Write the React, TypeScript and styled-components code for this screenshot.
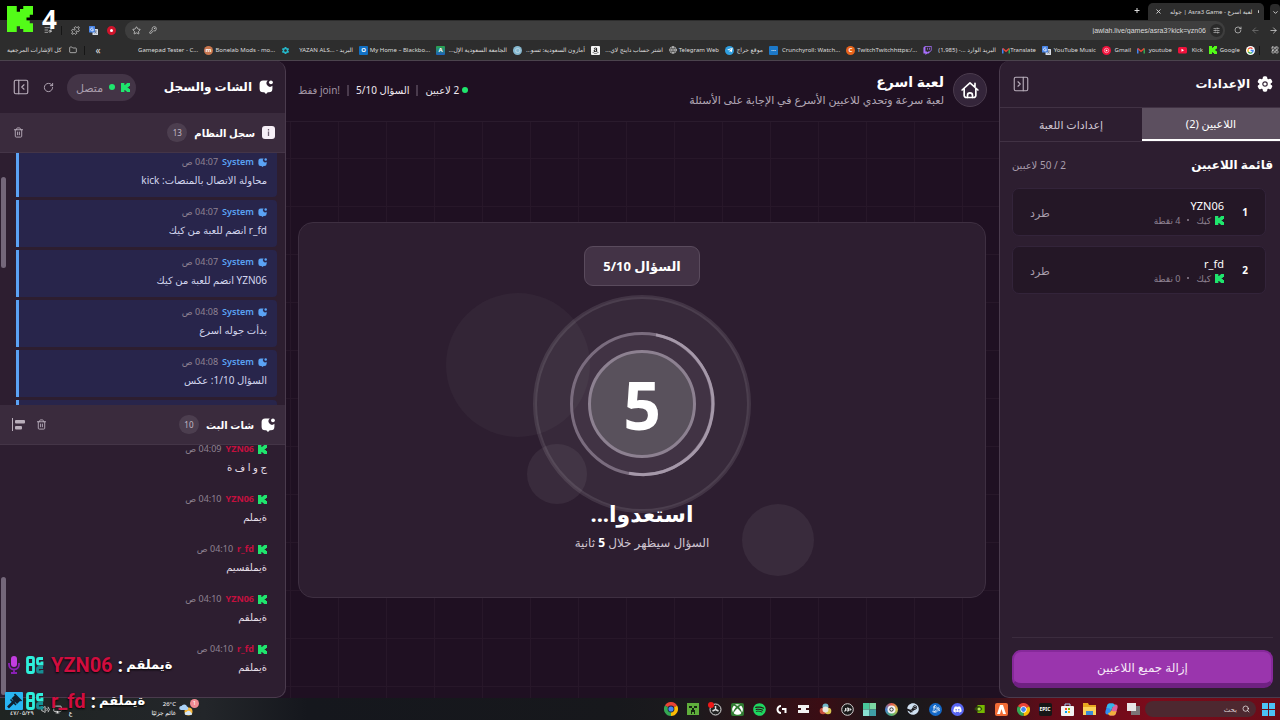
import React from "react";
import styled, { createGlobalStyle, css } from "styled-components";
import {
  ArrowLeft, ArrowRight, ChevronDown, Folder, Globe, KeyRound, LayoutGrid, ListMusic, Monitor,
  PanelLeftClose, PanelRightClose, Puzzle, RotateCw, Search, SlidersHorizontal, Star, Trash2, Volume2, X,
} from "lucide-react";
import { FaAmazon, FaBattleNet, FaDiscord, FaSpotify, FaSteam, FaTelegramPlane, FaTwitch, FaXbox } from "react-icons/fa";
import { MdSettings } from "react-icons/md";

const Global = createGlobalStyle`
  * { box-sizing: border-box; }
  body { margin: 0; background: #1f1022; color: #fff; font-family: "Noto Sans", "DejaVu Sans", sans-serif; }
  button, input { font: inherit; color: inherit; }
  button { background: none; border: 0; padding: 0; cursor: pointer; }
  h1, h2, h3, p, ul { margin: 0; padding: 0; }
  ul { list-style: none; }
  svg { display: block; flex: none; }
`;

/* ---------- icons ---------- */

const KickMark = ({ size = 10, color = "#1fe56d" }: { size?: number; color?: string }) => (
  <svg width={size} height={size} viewBox="0 0 8 9" preserveAspectRatio="none" fill={color}>
    <path d="M0 0H3V2H4V1H5V0H8V3H7V4H6V5H7V6H8V9H5V8H4V7H3V9H0Z" />
  </svg>
);

const ChatBubble = ({ size = 14 }: { size?: number }) => (
  <svg width={size} height={size} viewBox="0 0 24 24" fill="currentColor">
    <path d="M15 1H7a6 6 0 0 0-6 6v8a6 6 0 0 0 6 6h2l3 3 3-3h2a6 6 0 0 0 6-6v-5A6 6 0 0 1 15 1z" />
    <circle cx="20.500" cy="4" r="3.300" />
  </svg>
);

const InfoSquare = () => (
  <svg width="13" height="13" viewBox="0 0 13 13">
    <rect width="13" height="13" rx="3" fill="#f6eff7" />
    <path d="M6.500 3v1.400M6.500 5.600V10" stroke="#6d5f70" strokeWidth="1.300" />
  </svg>
);

const GearIcon = () => (
  <svg width="16" height="16" viewBox="0 0 24 24">
    <g fill="#fff">
      <circle cx="12" cy="12" r="8.500" />
      <rect x="8.500" y="0.500" width="7" height="23" rx="2.500" />
      <rect x="8.500" y="0.500" width="7" height="23" rx="2.500" transform="rotate(60 12 12)" />
      <rect x="8.500" y="0.500" width="7" height="23" rx="2.500" transform="rotate(120 12 12)" />
    </g>
    <circle cx="12" cy="12" r="3.300" fill="none" stroke="#3a2b3d" strokeWidth="1.800" />
  </svg>
);

const HomeIcon = () => (
  <svg width="20" height="20" viewBox="0 0 24 24" fill="none" stroke="#fff" strokeWidth="2" strokeLinecap="round" strokeLinejoin="round">
    <path d="M2.500 12 12 3.500 21.500 12M18 8V4M5 10v8.500A2.500 2.500 0 0 0 7.500 21h9a2.500 2.500 0 0 0 2.500-2.500V10" />
    <path d="M9 21v-2.500a3 3 0 0 1 6 0V21" />
  </svg>
);

const AlignIcon = () => (
  <svg width="13" height="13" viewBox="0 0 13 13" fill="#b9aebb">
    <path d="M0 0h1v13H0z" />
    <rect x="3" y="2" width="10" height="3.500" rx="1" />
    <rect x="3" y="8" width="7" height="3.500" rx="1" />
  </svg>
);

const GoogleG = () => (
  <svg width="9" height="9" viewBox="0 0 18 18">
    <circle cx="9" cy="9" r="9" fill="#fff" />
    <g fill="none" strokeWidth="2.600">
      <path d="M12.800 5.500A5.200 5.200 0 0 0 4.700 6.200" stroke="#ea4335" />
      <path d="M4.700 6.200a5.200 5.200 0 0 0 0 5.600" stroke="#fbbc05" />
      <path d="M4.700 11.800a5.200 5.200 0 0 0 7.600 1.400" stroke="#34a853" />
      <path d="M12.300 13.200A5.200 5.200 0 0 0 14.200 9H9.200" stroke="#4285f4" />
    </g>
  </svg>
);

const GmailIcon = () => (
  <svg width="8" height="7" viewBox="0 0 16 12" fill="none" strokeWidth="3">
    <path d="M1.500 12V2" stroke="#4285f4" />
    <path d="M14.500 12V2" stroke="#34a853" />
    <path d="M1.500 2 8 7.500 14.500 2" stroke="#ea4335" />
  </svg>
);

const TranslateIcon = () => (
  <svg width="9" height="9" viewBox="0 0 18 18">
    <rect x="7" y="6" width="11" height="12" rx="1" fill="#d7dce5" />
    <rect width="12" height="13" rx="1" fill="#4a86e8" />
    <path d="M8.500 5.200A3 3 0 1 0 9 7.500H6.200" stroke="#fff" strokeWidth="1.500" fill="none" />
    <path d="M11 10h5M13.500 9v1.500c0 2-1 4-2.500 5M12 11c.5 2 2 3.500 4 4" stroke="#5d6b82" strokeWidth="1.200" fill="none" />
  </svg>
);

const YoutubeIcon = () => (
  <svg width="9" height="7" viewBox="0 0 18 14">
    <rect width="18" height="13" rx="3" fill="#f0123c" />
    <path d="M7 3.500v6l5-3z" fill="#fff" />
  </svg>
);

const MusicIcon = () => (
  <svg width="9" height="9" viewBox="0 0 18 18">
    <circle cx="9" cy="9" r="9" fill="#f0123c" />
    <circle cx="9" cy="9" r="4.500" fill="none" stroke="#fff" />
    <path d="M7.500 6.500v5l4-2.500z" fill="#fff" />
  </svg>
);

const ChromeIcon = ({ size = 13, ring = "#fff" }: { size?: number; ring?: string }) => (
  <svg width={size} height={size} viewBox="0 0 24 24">
    <path d="M12 12 1.600 6A12 12 0 0 1 22.400 6z" fill="#ea4335" />
    <path d="M12 12 22.400 6A12 12 0 0 1 12 24z" fill="#fbbc05" />
    <path d="M12 12v12A12 12 0 0 1 1.600 6z" fill="#34a853" />
    <circle cx="12" cy="12" r="5.800" fill={ring} />
    <circle cx="12" cy="12" r="4.400" fill="#4285f4" />
  </svg>
);

const MicIcon = () => (
  <svg width="12" height="18" viewBox="0 0 12 18">
    <rect x="3" width="6" height="11" rx="3" fill="#c23de0" />
    <path d="M1 7v1.500a5 5 0 0 0 10 0V7M6 13.500V17M3 17h6" fill="none" stroke="#8a1fb5" strokeWidth="1.800" />
  </svg>
);

const ClanBadge = () => (
  <svg width="18" height="18" viewBox="0 0 18 18" fill="none" strokeWidth="2.800">
    <rect x="1.500" y="1.500" width="6" height="7" rx="1.500" stroke="#2ef0dc" />
    <rect x="1.500" y="8.500" width="6" height="8" rx="1.500" stroke="#2ef0dc" />
    <path d="M17 2.500h-4a1.500 1.500 0 0 0-1.500 1.500v2.500a1.500 1.500 0 0 0 1.500 1.500h3V5.500" stroke="#2ef0dc" />
    <path d="M17 11.500h-4a1.500 1.500 0 0 0-1.500 1.500v1.500a1.500 1.500 0 0 0 1.500 1.500h3V14" stroke="#168f94" />
  </svg>
);

const HammerBadge = () => (
  <svg width="18" height="18" viewBox="0 0 18 18">
    <rect width="18" height="18" rx="1" fill="#29b6f2" />
    <path d="M3 15.500 9.500 9" stroke="#10202e" strokeWidth="2.600" />
    <path d="M6.500 6.500 10 3l5.500 5.500L12 12z" fill="#10202e" />
    <path d="M5.500 7.500l5.500 5.500M9.500 2l7 7" stroke="#10202e" strokeWidth="1.600" />
  </svg>
);

const WeatherIcon = () => (
  <svg width="15" height="13" viewBox="0 0 30 26">
    <circle cx="19" cy="17" r="8" fill="#f6b73c" />
    <path d="M4 14a4 4 0 0 1 1-8 6 6 0 0 1 11 1 4 4 0 0 1 1 7z" fill="#a9d1f7" />
    <path d="M14 24a3 3 0 0 1 1-6 5 5 0 0 1 9 1 3 3 0 0 1 1 5z" fill="#d6e6f5" />
  </svg>
);

/* ---------- browser chrome ---------- */

const Screen = styled.div`
  position: relative;
  height: 100vh;
  display: grid;
  grid-template-rows: 20px 20px 21px minmax(0, 1fr) 22px;
  grid-template-columns: minmax(0, 1fr);
  overflow: hidden;
`;

const TabStrip = styled.div`
  display: flex;
  align-items: flex-end;
  gap: 6px;
  background: #000;
  color: #ddd;
`;

const TabMenu = styled.button`
  display: grid;
  place-items: center;
  width: 10px;
  height: 16px;
  border-radius: 4px 4px 0 0;
  background: #2b2b2b;
`;

const BrowserTab = styled.div`
  display: flex;
  align-items: center;
  gap: 6px;
  flex: none;
  width: 116px;
  height: 17px;
  padding: 0 5px;
  border-radius: 5px 5px 0 0;
  background: #2d2d2d;
  font: 6px/10px "Noto Sans", "DejaVu Sans", sans-serif;
  white-space: nowrap;
`;

const TabTitle = styled.span`
  flex: 1;
`;

const Favicon = styled.span`
  width: 8px;
  height: 3px;
  border-radius: 1px;
  background: #c9c9c9;
`;

const NewTab = styled.button`
  height: 20px;
`;

const Toolbar = styled.div`
  display: flex;
  align-items: center;
  gap: 9px;
  padding: 0 2px 0 0;
  background: #2d2d2d;
  color: #d8d8d8;
`;

const Omnibox = styled.label`
  flex: 1;
  display: flex;
  align-items: center;
  gap: 8px;
  height: 19px;
  padding: 0 2px 0 7px;
  border-radius: 9px;
  background: #3e3e3e;
`;

const UrlField = styled.span`
  flex: 1;
  display: flex;
  align-items: center;
  gap: 4px;
`;

const SiteInfo = styled.span`
  display: grid;
  place-items: center;
  width: 13px;
  height: 13px;
  border-radius: 50%;
  background: #2a2a2a;
`;

const UrlInput = styled.input`
  flex: 1;
  min-width: 0;
  border: 0;
  outline: 0;
  padding: 0;
  background: none;
  font: 7px "Liberation Sans", sans-serif;
  color: #dcdcdc;
  text-align: right;
`;

const ExtensionRow = styled.div`
  display: flex;
  align-items: center;
  gap: 9px;
  padding-left: 44px;
`;

const RedDot = styled.span`
  width: 9px;
  height: 9px;
  border: 3px solid #d0142c;
  border-radius: 50%;
  background: #fff;
`;

const Bookmarks = styled.nav`
  display: flex;
  align-items: center;
  padding-left: 7px;
  background: #2d2d2d;
  border-bottom: 1px solid #4b434d;
  font: 6px/10px "Noto Sans", "DejaVu Sans", sans-serif;
  color: #dedede;
  white-space: nowrap;
`;

const AppsButton = styled.button`
  flex: none;
  width: 20px;
  padding-right: 1px;
`;

const BarDivider = styled.span`
  flex: none;
  width: 1px;
  height: 9px;
  background: #161616;
`;

const BookmarkRow = styled.div`
  display: flex;
  margin-right: 4px;
`;

const Bookmark = styled.a<{ $width: number }>`
  display: flex;
  align-items: center;
  gap: 6px;
  flex: 0 0 ${(p) => p.$width}px;
  min-width: 0;
  color: inherit;
  text-decoration: none;
`;

const SiteBadge = styled.span<{ $bg: string; $round?: boolean }>`
  display: grid;
  place-items: center;
  flex: none;
  width: 9px;
  height: 9px;
  border-radius: ${(p) => (p.$round ? "50%" : "1px")};
  background: ${(p) => p.$bg};
  color: #fff;
  font-size: 6px;
  font-weight: 700;
  line-height: 9px;
`;

const BookmarkEnd = styled.div`
  display: flex;
  align-items: center;
  gap: 7px;
  margin-right: auto;
`;

const MoreMark = styled.span`
  margin-left: 4px;
  font-size: 10px;
`;

const bookmarks: { label: string; width: number; icon: React.ReactNode; rtl?: boolean }[] = [
  { label: "Google", width: 38, icon: <GoogleG /> },
  { label: "Kick", width: 30, icon: <KickMark size={8} color="#53fc18" /> },
  { label: "youtube", width: 42, icon: <YoutubeIcon /> },
  { label: "Gmail", width: 34, icon: <GmailIcon /> },
  { label: "YouTube Music", width: 60, icon: <MusicIcon /> },
  { label: "Translate", width: 41, icon: <TranslateIcon /> },
  { label: "البريد الوارد ...- (1,985)", width: 78, icon: <GmailIcon />, rtl: true },
  { label: "TwitchTwitchhttps:/...", width: 77, icon: <FaTwitch size={9} color="#a970ff" /> },
  { label: "Crunchyroll: Watch...", width: 77, icon: <SiteBadge $bg="#e8641b" $round>C</SiteBadge> },
  { label: "موقع حراج", width: 44, icon: <SiteBadge $bg="#1c78c8">···</SiteBadge>, rtl: true },
  { label: "Telegram Web", width: 57, icon: <SiteBadge $bg="#2f9fe0" $round><FaTelegramPlane size={6} /></SiteBadge> },
  { label: "اشتر حساب داينج لاي...", width: 77, icon: <Globe size={8} />, rtl: true },
  { label: "أمازون السعودية: تسو...", width: 78, icon: <SiteBadge $bg="#f2f2f2"><FaAmazon size={7} color="#222" /></SiteBadge>, rtl: true },
  { label: "الجامعة السعودية الإل...", width: 77, icon: <SiteBadge $bg="#86b8cf" $round>○</SiteBadge>, rtl: true },
  { label: "My Home – Blackbo...", width: 77, icon: <SiteBadge $bg="linear-gradient(#2aa84a,#1d5fc0)">A</SiteBadge> },
  { label: "YAZAN ALS... - البريد", width: 78, icon: <SiteBadge $bg="#1170c4">O</SiteBadge> },
  { label: "Bonelab Mods - mo...", width: 77, icon: <MdSettings size={9} color="#25b7c9" /> },
  { label: "Gamepad Tester - C...", width: 77, icon: <SiteBadge $bg="#c9764e" $round>m</SiteBadge> },
];

/* ---------- application layout ---------- */

const AppShell = styled.div`
  display: flex;
  min-height: 0;
  background: #1f1022;
`;

const SidePanel = styled.aside<{ $side: "right" | "left" }>`
  position: relative;
  display: flex;
  flex-direction: column;
  flex: none;
  width: ${(p) => (p.$side === "right" ? 281 : 286)}px;
  min-height: 0;
  overflow: hidden;
  background: #2d1e30;
  border: 1px solid #4a3b4d;
  border-top: 0;
  ${(p) =>
    p.$side === "right"
      ? css`border-right: 0; border-radius: 10px 0 0 10px;`
      : css`border-left: 0; border-radius: 0 10px 10px 0;`}
`;

const PanelHeader = styled.header<{ $height: number; $inset: number }>`
  display: flex;
  align-items: center;
  gap: 7px;
  flex: none;
  height: ${(p) => p.$height}px;
  padding: 0 ${(p) => p.$inset}px 0 12px;
`;

const PanelTitle = styled.h2`
  font-size: 12px;
  line-height: 20px;
  font-weight: 700;
  margin-left: auto;
`;

const IconButton = styled.button`
  display: grid;
  place-items: center;
  min-width: 11px;
  color: #b9aebb;
`;

/* settings panel */

const TabList = styled.div`
  display: grid;
  grid-template-columns: 138px 1fr;
  flex: none;
  height: 35px;
  border-top: 1px solid #413244;
  border-bottom: 1px solid #413244;
`;

const PanelTab = styled.button<{ $active?: boolean }>`
  font-size: 11px;
  color: ${(p) => (p.$active ? "#fff" : "#cfc5d1")};
  ${(p) => p.$active && css`background: #5c4f5f; border-bottom: 2px solid #fff;`}
`;

const PlayersBody = styled.section`
  flex: 1;
  padding: 12px 7px 0 12px;
`;

const PlayersHeading = styled.div`
  display: flex;
  align-items: center;
  justify-content: space-between;
  height: 22px;
  margin-bottom: 12px;
`;

const PlayersTitle = styled.h3`
  font-size: 12px;
  line-height: 22px;
`;

const Muted = styled.span`
  font-size: 10px;
  color: #a99dac;
`;

const PlayerList = styled.ul`
  display: flex;
  flex-direction: column;
  gap: 10px;
  padding-right: 7px;
`;

const PlayerCard = styled.li`
  display: flex;
  align-items: center;
  height: 48px;
  padding: 0 17px;
  border: 1px solid #33243a;
  border-radius: 7px;
  background: #241726;
`;

const Rank = styled.span`
  width: 24px;
  font-size: 10px;
  font-weight: 700;
`;

const PlayerInfo = styled.div`
  flex: 1;
  display: flex;
  flex-direction: column;
  gap: 1px;
`;

const PlayerName = styled.span`
  font-size: 11px;
  line-height: 15px;
`;

const PlayerMeta = styled.span`
  display: flex;
  align-items: center;
  gap: 4px;
  font-size: 9px;
  line-height: 13px;
  color: #8f8392;
`;

const MetaDot = styled.span`
  width: 2px;
  height: 2px;
  margin: 0 3px;
  border-radius: 50%;
  background: #8f8392;
`;

const KickOut = styled.button`
  font-size: 11px;
  color: #a99dac;
`;

const PanelFooter = styled.footer`
  flex: none;
  margin: 0 7px 0 12px;
  padding: 12px 0 9px;
  border-top: 1px solid #3b2c3e;
`;

const ClearButton = styled.button`
  width: 100%;
  height: 38px;
  border: 2px solid #86299a;
  border-bottom: 5px solid #6f2182;
  border-radius: 9px;
  background: #9a35ad;
  font-size: 12px;
  color: #f6e9f8;
`;

/* game stage */

const Stage = styled.main`
  flex: 1;
  min-width: 0;
  display: flex;
  flex-direction: column;
  background-color: #1f1022;
  background-image:
    linear-gradient(90deg, #271729 1px, transparent 1px),
    linear-gradient(#271729 1px, transparent 1px);
  background-size: 48px 48px;
  background-position: 4px 1px;
`;

const StageHeader = styled.header`
  display: flex;
  align-items: center;
  gap: 9px;
  flex: none;
  height: 61px;
  padding: 0 12px 2px 12px;
  background: #1f1022;
  border-bottom: 1px solid #2a1b2d;
`;

const HomeButton = styled.button`
  display: grid;
  place-items: center;
  width: 34px;
  height: 34px;
  border: 1px solid #4a3b4d;
  border-radius: 50%;
  background: #34253a;
`;

const StageTitle = styled.h1`
  font-size: 14px;
  line-height: 20px;
`;

const StageSubtitle = styled.p`
  font-size: 11px;
  line-height: 16px;
  color: #b3a8b6;
`;

const Stats = styled.div`
  display: flex;
  align-items: center;
  gap: 7px;
  margin-right: auto;
  font-size: 10px;
  white-space: nowrap;
`;

const Stat = styled.span<{ $muted?: boolean }>`
  display: flex;
  align-items: center;
  gap: 3px;
  color: ${(p) => (p.$muted ? "#a195a4" : "#f0e9f1")};
`;

const StatDivider = styled.span`
  width: 2px;
  height: 11px;
  background: #4a3b4d;
`;

const StatusDot = styled.span`
  width: 6px;
  height: 6px;
  border-radius: 50%;
  background: #1fe56d;
`;

const StageBody = styled.div`
  flex: 1;
  display: flex;
  align-items: center;
  padding: 0 13px 0 12px;
`;

const CountdownCard = styled.section`
  position: relative;
  flex: 1;
  display: flex;
  flex-direction: column;
  align-items: center;
  height: 376px;
  padding-top: 23px;
  border: 1px solid #3e2f41;
  border-radius: 15px;
  background: #2d1e30;
`;

const QuestionPill = styled.div`
  height: 40px;
  padding: 0 18px;
  border: 1px solid #5a4b5d;
  border-radius: 9px;
  background: #433346;
  font-size: 13px;
  font-weight: 700;
  line-height: 38px;
  z-index: 1;
`;

const Bubble = styled.span<{ $size: number; $x: number; $y: number; $faint?: boolean }>`
  position: absolute;
  left: calc(50% + ${(p) => p.$x}px);
  top: ${(p) => p.$y}px;
  width: ${(p) => p.$size}px;
  height: ${(p) => p.$size}px;
  border-radius: 50%;
  background: rgba(255, 255, 255, ${(p) => (p.$faint ? 0.03 : 0.06)});
`;

const Dial = styled.div`
  position: relative;
  display: grid;
  place-items: center;
  width: 144px;
  height: 144px;
  margin-top: 46px;
`;

const DialRings = styled.svg`
  position: absolute;
  inset: -38px;
`;

const DialNumber = styled.span`
  position: relative;
  font-size: 66px;
  line-height: 72px;
  font-weight: 700;
`;

const ReadyTitle = styled.h2`
  position: relative;
  margin-top: 22px;
  font-size: 22px;
  line-height: 30px;
`;

const ReadyText = styled.p`
  margin-top: 5px;
  font-size: 12px;
  line-height: 20px;
  color: #cfc5d1;

  b { color: #fff; }
`;

/* chat panel */

const ConnectionPill = styled.span`
  display: flex;
  align-items: center;
  gap: 6px;
  height: 27px;
  padding: 0 6px 0 9px;
  border-radius: 14px;
  background: #433446;
  font-size: 11px;
  color: #a99dac;
`;

const HeaderTools = styled.div`
  display: flex;
  align-items: center;
  gap: 13px;
`;

const SectionBar = styled.header`
  display: flex;
  align-items: center;
  gap: 7px;
  flex: none;
  height: 40px;
  padding: 0 10px;
  border-bottom: 1px solid #443547;
  background: #3a2b3d;
`;

const SectionTitle = styled.h3`
  font-size: 10px;
  line-height: 18px;
`;

const CountBadge = styled.span`
  min-width: 20px;
  height: 19px;
  padding: 0 5px;
  border-radius: 10px;
  background: #4c3e4f;
  font-size: 8px;
  line-height: 19px;
  text-align: center;
  color: #c3b9c5;
`;

const SectionTools = styled.div`
  display: flex;
  align-items: center;
  gap: 7px;
  margin-right: auto;
`;

const SectionButton = styled(IconButton)`
  width: 16px;
`;

const Feed = styled.div<{ $grow?: boolean }>`
  position: relative;
  flex: ${(p) => (p.$grow ? "1 1 0" : "0 0 252px")};
  min-height: 0;
  overflow: hidden;
`;

const MessageList = styled.ul<{ $shift: number }>`
  display: flex;
  flex-direction: column;
  gap: 3px;
  margin-top: -${(p) => p.$shift}px;
  padding: 0 8px 0 16px;
`;

const Message = styled.li<{ $system?: boolean }>`
  flex: none;
  height: 47px;
  padding: 4px 10px 0;
  ${(p) =>
    p.$system &&
    css`
      border-left: 3px solid #5ba3f5;
      border-radius: 0 4px 4px 0;
      background: #28254b;
    `}
`;

const MessageMeta = styled.div`
  display: flex;
  align-items: center;
  gap: 4px;
  font-size: 9px;
  line-height: 16px;
`;

const Author = styled.span<{ $system?: boolean }>`
  font-weight: ${(p) => (p.$system ? 600 : 700)};
  font-size: 9px;
  color: ${(p) => (p.$system ? "#5ba3f5" : "#c4103f")};
`;

const SystemGlyph = styled.span`
  color: #5ba3f5;
`;

const Time = styled.time`
  color: #8f8392;
`;

const MessageText = styled.p<{ $system?: boolean }>`
  font-size: 10px;
  line-height: 20px;
  color: ${(p) => (p.$system ? "#d3d6ee" : "#e6dfe8")};
`;

const ScrollThumb = styled.span<{ $top: number; $height: number }>`
  position: absolute;
  left: 1px;
  top: ${(p) => p.$top}px;
  width: 5px;
  height: ${(p) => p.$height}px;
  border-radius: 3px;
  background: #74677a;
`;

const systemLog = [
  { time: "04:07", text: "محاولة الاتصال بالمنصات: kick" },
  { time: "04:07", text: "r_fd انضم للعبة من كيك" },
  { time: "04:07", text: "YZN06 انضم للعبة من كيك" },
  { time: "04:08", text: "بدأت جوله اسرع" },
  { time: "04:08", text: "السؤال 1/10: عكس" },
];

const streamChat = [
  { author: "YZN06", time: "04:09", text: "ج و ا ف ة" },
  { author: "YZN06", time: "04:10", text: "ةيملم" },
  { author: "r_fd", time: "04:10", text: "ةيملقسيم" },
  { author: "YZN06", time: "04:10", text: "ةيملقم" },
  { author: "r_fd", time: "04:10", text: "ةيملقم" },
];

/* ---------- taskbar ---------- */

const Taskbar = styled.footer`
  display: flex;
  align-items: center;
  padding: 0 5px 0 10px;
  background: linear-gradient(90deg, #1f2422 0%, #23262a 16%, #15171d 24%, #17181c 48%, #1c1a1d 54%, #3a0d14 64%, #17191b 70%, #28161b 76%, #620b18 82%, #7c0b1b 90%, #6a0c18 100%);
`;

const TaskIcon = styled.button`
  display: grid;
  place-items: center;
  width: 22px;
  height: 22px;
  color: #fff;
`;

const Tile = styled.span<{ $bg: string; $round?: boolean }>`
  display: grid;
  place-items: center;
  width: 13px;
  height: 13px;
  border-radius: ${(p) => (p.$round ? "50%" : "2px")};
  background: ${(p) => p.$bg};
  color: #fff;
  font-size: 5px;
  font-weight: 700;
`;

const TaskSearch = styled.label`
  display: flex;
  align-items: center;
  gap: 5px;
  width: 111px;
  height: 16px;
  margin: 0 6px 0 1px;
  padding: 0 6px;
  border-radius: 8px;
  background: #4d2830;
`;

const TaskSearchInput = styled.input`
  flex: 1;
  min-width: 0;
  padding: 0;
  border: 0;
  outline: 0;
  background: none;
  font-size: 7px;

  &::placeholder { color: #d9c9cc; opacity: 1; }
`;

const Tray = styled.div`
  display: flex;
  align-items: center;
  gap: 7px;
  margin-right: auto;
  font: 6px/9px "Noto Sans", "DejaVu Sans", sans-serif;
`;

const Weather = styled.div`
  position: relative;
  display: flex;
  align-items: center;
  gap: 3px;
  margin-left: 72px;
`;

const AlertBadge = styled.span`
  position: absolute;
  top: -1px;
  right: -5px;
  width: 9px;
  height: 9px;
  border-radius: 50%;
  background: #f08a92;
  line-height: 9px;
  text-align: center;
`;

const TrayGroup = styled.div`
  display: flex;
  align-items: center;
  gap: 3px;
`;

const TrayText = styled.span`
  align-self: flex-end;
`;

const taskIcons: { name: string; icon: React.ReactNode }[] = [
  { name: "Task view", icon: <svg width="13" height="12" viewBox="0 0 13 12"><rect x="4" y="3" width="9" height="9" fill="#7b7477" /><rect width="9" height="8" fill="#e9e6e7" /></svg> },
  { name: "Copilot", icon: <svg width="13" height="13" viewBox="0 0 26 26"><path d="M9 1h7l-5 17c-1 4-3 5-6 5-4 0-5-3-4-7L4 6c1-3 2-5 5-5z" fill="#2f8df0" /><path d="M17 25h-7l5-17c1-4 3-5 6-5 4 0 5 3 4 7l-3 10c-1 3-2 5-5 5z" fill="#e0609c" /><path d="M9 1h7c3 0 3 3 4 5-4 0-5 2-6 5l-2 5c-1-4-3-6-6-6H3l1-4c1-3 2-5 5-5z" fill="#35b6e8" /><path d="M17 25h-7c-3 0-3-3-4-5 4 0 5-2 6-5l3 1c2 1 5 1 8 0l-1 4c-1 3-2 5-5 5z" fill="#f2b03c" /></svg> },
  { name: "Explorer", icon: <svg width="13" height="12" viewBox="0 0 13 12"><path d="M0 0h5l1 2h7v10H0z" fill="#e8a720" /><path d="M0 4h13v8H0z" fill="#fbd35a" /><path d="M3 8h7v4H3z" fill="#3b8ad8" /></svg> },
  { name: "Store", icon: <svg width="13" height="13" viewBox="0 0 13 13"><path d="M4 3V1h5v2" fill="none" stroke="#9fd0f2" /><rect y="3" width="13" height="10" rx="1" fill="#f2f2f2" /><path d="M4 5h2v2H4z" fill="#f25022" /><path d="M7 5h2v2H7z" fill="#7fba00" /><path d="M4 8h2v2H4z" fill="#00a4ef" /><path d="M7 8h2v2H7z" fill="#ffb900" /></svg> },
  { name: "Epic Games", icon: <Tile $bg="#161616">EPIC</Tile> },
  { name: "Chrome", icon: <ChromeIcon /> },
  { name: "FiveM", icon: <Tile $bg="#f26b35"><svg width="11" height="11" viewBox="0 0 11 11"><path d="M4 1h3L10 10H7L5.500 5 4 10H1z" fill="#fff" /></svg></Tile> },
  { name: "Nvidia", icon: <svg width="11" height="8" viewBox="0 0 13 10"><path d="M4 0h9v10H4z" fill="#76b900" /><path d="M0 5c3-5 8-5 10 0-2 4-7 4-10 0z" fill="#32520a" /><circle cx="6" cy="5" r="2" fill="#b8e05a" /></svg> },
  { name: "Discord", icon: <Tile $bg="#5865f2" $round><FaDiscord size={9} /></Tile> },
  { name: "Battle.net", icon: <Tile $bg="#1468c8" $round><FaBattleNet size={9} /></Tile> },
  { name: "Steam", icon: <FaSteam size={12} color="#cfe0f0" /> },
  { name: "Mail", icon: <Tile $bg="conic-gradient(#e25a4a,#d7c34b,#4bae6d,#4b83d4,#e25a4a)" $round><svg width="9" height="9" viewBox="0 0 9 9"><circle cx="4.500" cy="4.500" r="4" fill="#f4f4f4" /><circle cx="4.500" cy="4.500" r="1.700" fill="none" stroke="#333" /></svg></Tile> },
  { name: "Tiles", icon: <svg width="13" height="13" viewBox="0 0 13 13"><path d="M0 0h6.500v6.500H0z" fill="#49c79a" /><path d="M6.500 0H13v6.500H6.500z" fill="#7cd7a2" /><path d="M0 6.500h6.500V13H0z" fill="#8adfd0" /><path d="M6.500 6.500H13V13H6.500z" fill="#3f9fa6" /></svg> },
  { name: "Audio", icon: <svg width="13" height="13" viewBox="0 0 13 13"><circle cx="6.500" cy="6.500" r="5.800" fill="#181818" stroke="#d4d4d4" /><path d="M3 8h1.500V5M6 8V5h1.500v3zM9 5v3M9 6.500h1.500" stroke="#ddd" fill="none" /></svg> },
  { name: "Photos", icon: <svg width="13" height="13" viewBox="0 0 13 13"><circle cx="6.500" cy="3.500" r="3" fill="#6fb7c9" /><circle cx="4" cy="8" r="3.300" fill="#c8503e" /><circle cx="9" cy="8" r="3.300" fill="#d9c64f" /><circle cx="6.500" cy="6.500" r="3" fill="#ece8e0" /></svg> },
  { name: "Editor", icon: <svg width="11" height="11" viewBox="0 0 11 11" fill="#f2f2f2"><path d="M0 1h11v3H8v2h3v3H0V6h3V4H0z" /></svg> },
  { name: "Logitech", icon: <svg width="11" height="11" viewBox="0 0 11 11" fill="none" stroke="#fff" strokeWidth="2"><path d="M5 2a3.500 3.500 0 1 0 0 7M6 5h3.500v4" /></svg> },
  { name: "Spotify", icon: <FaSpotify size={13} color="#1ed760" /> },
  { name: "Xbox", icon: <Tile $bg="#2f7a30"><FaXbox size={11} /></Tile> },
  { name: "OBS", icon: <svg width="14" height="14" viewBox="0 0 14 14"><circle cx="7.500" cy="7.500" r="5.500" fill="#222" stroke="#ddd" /><path d="M7.500 4v3.500L4.500 9M7.500 7.500l3 1.500" stroke="#ddd" strokeWidth="1.500" /><circle cx="3" cy="3" r="3" fill="#f01818" /></svg> },
  { name: "Minecraft", icon: <svg width="12" height="12" viewBox="0 0 12 12"><path d="M0 0h12v12H0z" fill="#5fae3c" /><path d="M2 3h3v2H2zM7 3h3v2H7zM5 5h2v2h1v4H7V9H5v2H4V7h1z" fill="#152511" /></svg> },
  { name: "Chrome profile", icon: <ChromeIcon size={14} ring="#223" /> },
];

/* ---------- stream overlay ---------- */

const ScoreOverlay = styled.div`
  position: absolute;
  left: 7px;
  top: 5px;
  display: flex;
  align-items: center;
  gap: 9px;
  font: 700 26px/28px "Noto Sans", sans-serif;
`;

const ChatOverlay = styled.ul`
  position: absolute;
  left: 5px;
  bottom: 4px;
  display: flex;
  flex-direction: column;
  gap: 6px;
`;

const OverlayLine = styled.li`
  display: flex;
  align-items: center;
  gap: 3px;
  height: 30px;
  font: 700 20px/30px "Roboto", "DejaVu Sans", sans-serif;
  text-shadow: 0 1px 2px #000;
`;

const OverlayIcon = styled.span`
  display: grid;
  place-items: center;
  width: 18px;
`;

const OverlayName = styled.span`
  margin: 0 2px 0 4px;
  color: #d00d3f;
`;

const OverlayText = styled.span`
  font-size: 13px;
`;

/* ---------- views ---------- */

const Browser = () => (
  <>
    <TabStrip>
      <TabMenu aria-label="بحث في علامات التبويب"><ChevronDown size={7} strokeWidth={3} /></TabMenu>
      <BrowserTab>
        <Favicon />
        <TabTitle>لعبة اسرع - Asra3 Game | جوله</TabTitle>
        <IconButton aria-label="إغلاق"><X size={7} color="#ddd" strokeWidth={3} /></IconButton>
      </BrowserTab>
      <NewTab aria-label="علامة تبويب جديدة">
        <svg width="10" height="20" viewBox="0 0 10 20"><path d="M5 8v5M2.500 10.500h5" stroke="#ddd" /></svg>
      </NewTab>
    </TabStrip>
    <Toolbar>
      <ArrowRight size={9} />
      <ArrowLeft size={9} color="#777" />
      <RotateCw size={8} />
      <Omnibox>
        <UrlField>
          <SiteInfo><SlidersHorizontal size={7} /></SiteInfo>
          <UrlInput dir="ltr" aria-label="العنوان" defaultValue="jawlah.live/games/asra3?kick=yzn06" />
        </UrlField>
        <KeyRound size={8} />
        <Star size={9} />
      </Omnibox>
      <ExtensionRow>
        <RedDot />
        <TranslateIcon />
        <Puzzle size={9} />
        <BarDivider />
        <ListMusic size={8} />
      </ExtensionRow>
    </Toolbar>
    <Bookmarks>
      <AppsButton aria-label="التطبيقات"><LayoutGrid size={8} /></AppsButton>
      <BarDivider />
      <BookmarkRow>
        {bookmarks.map((b) => (
          <Bookmark key={b.label} href="#" $width={b.width}>
            {b.icon}
            <span dir={b.rtl ? "rtl" : "ltr"}>{b.label}</span>
          </Bookmark>
        ))}
      </BookmarkRow>
      <BookmarkEnd>
        <MoreMark dir="ltr">«</MoreMark>
        <BarDivider />
        <Folder size={8} />
        <span>كل الإشارات المرجعية</span>
      </BookmarkEnd>
    </Bookmarks>
  </>
);

const Settings = () => (
  <SidePanel $side="right">
    <PanelHeader $height={46} $inset={7}>
      <GearIcon />
      <PanelTitle>الإعدادات</PanelTitle>
      <IconButton aria-label="إخفاء"><PanelRightClose size={18} strokeWidth={1.5} /></IconButton>
    </PanelHeader>
    <TabList role="tablist">
      <PanelTab role="tab" aria-selected $active>اللاعبين (2)</PanelTab>
      <PanelTab role="tab">إعدادات اللعبة</PanelTab>
    </TabList>
    <PlayersBody>
      <PlayersHeading>
        <PlayersTitle>قائمة اللاعبين</PlayersTitle>
        <Muted>2 / 50 لاعبين</Muted>
      </PlayersHeading>
      <PlayerList>
        {[["YZN06", 4], ["r_fd", 0]].map(([name, points], i) => (
          <PlayerCard key={name}>
            <Rank>{i + 1}</Rank>
            <PlayerInfo>
              <PlayerName>{name}</PlayerName>
              <PlayerMeta>
                <KickMark size={9} />
                <span>كيك</span>
                <MetaDot />
                <span>{points} نقطة</span>
              </PlayerMeta>
            </PlayerInfo>
            <KickOut>طرد</KickOut>
          </PlayerCard>
        ))}
      </PlayerList>
    </PlayersBody>
    <PanelFooter>
      <ClearButton>إزالة جميع اللاعبين</ClearButton>
    </PanelFooter>
  </SidePanel>
);

const Game = () => (
  <Stage>
    <StageHeader>
      <HomeButton aria-label="الرئيسية"><HomeIcon /></HomeButton>
      <div>
        <StageTitle>لعبة اسرع</StageTitle>
        <StageSubtitle>لعبة سرعة وتحدي للاعبين الأسرع في الإجابة على الأسئلة</StageSubtitle>
      </div>
      <Stats>
        <Stat><StatusDot />2 لاعبين</Stat>
        <StatDivider />
        <Stat>السؤال 5/10</Stat>
        <StatDivider />
        <Stat $muted>!join فقط</Stat>
      </Stats>
    </StageHeader>
    <StageBody>
      <CountdownCard>
        <Bubble $size={144} $x={-196} $y={70} $faint />
        <Bubble $size={72} $x={100} $y={281} />
        <QuestionPill>السؤال 5/10</QuestionPill>
        <Dial>
          <DialRings width="220" height="220" viewBox="0 0 220 220" fill="none">
            <circle cx="110" cy="110" r="107" fill="#fff" fillOpacity=".05" stroke="#fff" strokeOpacity=".1" strokeWidth="4" />
            <circle cx="110" cy="110" r="70.500" fill="#fff" fillOpacity=".05" stroke="#7a6c7e" strokeWidth="3" />
            <path d="M124 40.900A70.500 70.500 0 0 1 97 179.300" stroke="#a598a9" strokeWidth="3" />
            <circle cx="110" cy="110" r="52.500" fill="#59515c" stroke="#8d8191" strokeWidth="3" />
          </DialRings>
          <DialNumber>5</DialNumber>
        </Dial>
        <Bubble $size={60} $x={-115} $y={221} />
        <ReadyTitle>استعدوا...</ReadyTitle>
        <ReadyText>السؤال سيظهر خلال <b>5</b> ثانية</ReadyText>
      </CountdownCard>
    </StageBody>
  </Stage>
);

const Chat = () => (
  <SidePanel $side="left">
    <PanelHeader $height={52} $inset={12}>
      <ChatBubble size={14} />
      <PanelTitle>الشات والسجل</PanelTitle>
      <HeaderTools>
        <ConnectionPill><KickMark size={9} /><StatusDot />متصل</ConnectionPill>
        <IconButton aria-label="تحديث"><RotateCw size={11} /></IconButton>
        <IconButton aria-label="إخفاء"><PanelLeftClose size={18} strokeWidth={1.5} /></IconButton>
      </HeaderTools>
    </PanelHeader>
    <SectionBar>
      <InfoSquare />
      <SectionTitle>سجل النظام</SectionTitle>
      <CountBadge>13</CountBadge>
      <SectionTools>
        <SectionButton aria-label="مسح السجل"><Trash2 size={11} /></SectionButton>
      </SectionTools>
    </SectionBar>
    <Feed>
      <MessageList $shift={3}>
        {systemLog.map((m, i) => (
          <Message key={i} $system>
            <MessageMeta>
              <SystemGlyph><ChatBubble size={9} /></SystemGlyph>
              <Author $system>System</Author>
              <Time>{m.time} ص</Time>
            </MessageMeta>
            <MessageText $system>{m.text}</MessageText>
          </Message>
        ))}
        <Message $system />
      </MessageList>
      <ScrollThumb $top={24} $height={91} />
    </Feed>
    <SectionBar>
      <ChatBubble size={14} />
      <SectionTitle>شات البث</SectionTitle>
      <CountBadge>10</CountBadge>
      <SectionTools>
        <SectionButton aria-label="مسح الشات"><Trash2 size={11} /></SectionButton>
        <SectionButton aria-label="محاذاة"><AlignIcon /></SectionButton>
      </SectionTools>
    </SectionBar>
    <Feed $grow>
      <MessageList $shift={8}>
        {streamChat.map((m, i) => (
          <Message key={i}>
            <MessageMeta>
              <KickMark size={9} />
              <Author>{m.author}</Author>
              <Time>{m.time} ص</Time>
            </MessageMeta>
            <MessageText>{m.text}</MessageText>
          </Message>
        ))}
      </MessageList>
      <ScrollThumb $top={132} $height={118} />
    </Feed>
  </SidePanel>
);

export default function App() {
  return (
    <Screen dir="rtl">
      <Global />
      <Browser />
      <AppShell>
        <Settings />
        <Game />
        <Chat />
      </AppShell>
      <Taskbar>
        <IconButton aria-label="ابدأ">
          <svg width="13" height="13" viewBox="0 0 13 13" fill="#4cc2f5"><path d="M0 0h6v6H0zM7 0h6v6H7zM0 7h6v6H0zM7 7h6v6H7z" /></svg>
        </IconButton>
        <TaskSearch>
          <Search size={8} />
          <TaskSearchInput aria-label="بحث" placeholder="بحث" />
        </TaskSearch>
        {taskIcons.map((t) => (
          <TaskIcon key={t.name} aria-label={t.name}>{t.icon}</TaskIcon>
        ))}
        <Tray>
          <Weather>
            <WeatherIcon />
            <div>
              <div>26°C</div>
              <div>غائم جزئيًا</div>
            </div>
            <AlertBadge>1</AlertBadge>
          </Weather>
          <TrayText>ع</TrayText>
          <TrayGroup><Monitor size={9} /><Volume2 size={9} /></TrayGroup>
          <TrayText>٤٧/٠٥/٢٩</TrayText>
        </Tray>
      </Taskbar>
      <ScoreOverlay dir="ltr">
        <KickMark size={26} color="#53fc18" />
        <span>4</span>
      </ScoreOverlay>
      <ChatOverlay dir="ltr">
        <OverlayLine>
          <OverlayIcon><MicIcon /></OverlayIcon>
          <ClanBadge />
          <OverlayName>YZN06</OverlayName>
          <span>:</span>
          <OverlayText>ةيملقم</OverlayText>
        </OverlayLine>
        <OverlayLine>
          <OverlayIcon><HammerBadge /></OverlayIcon>
          <ClanBadge />
          <OverlayName>r_fd</OverlayName>
          <span>:</span>
          <OverlayText>ةيملقم</OverlayText>
        </OverlayLine>
      </ChatOverlay>
    </Screen>
  );
}
